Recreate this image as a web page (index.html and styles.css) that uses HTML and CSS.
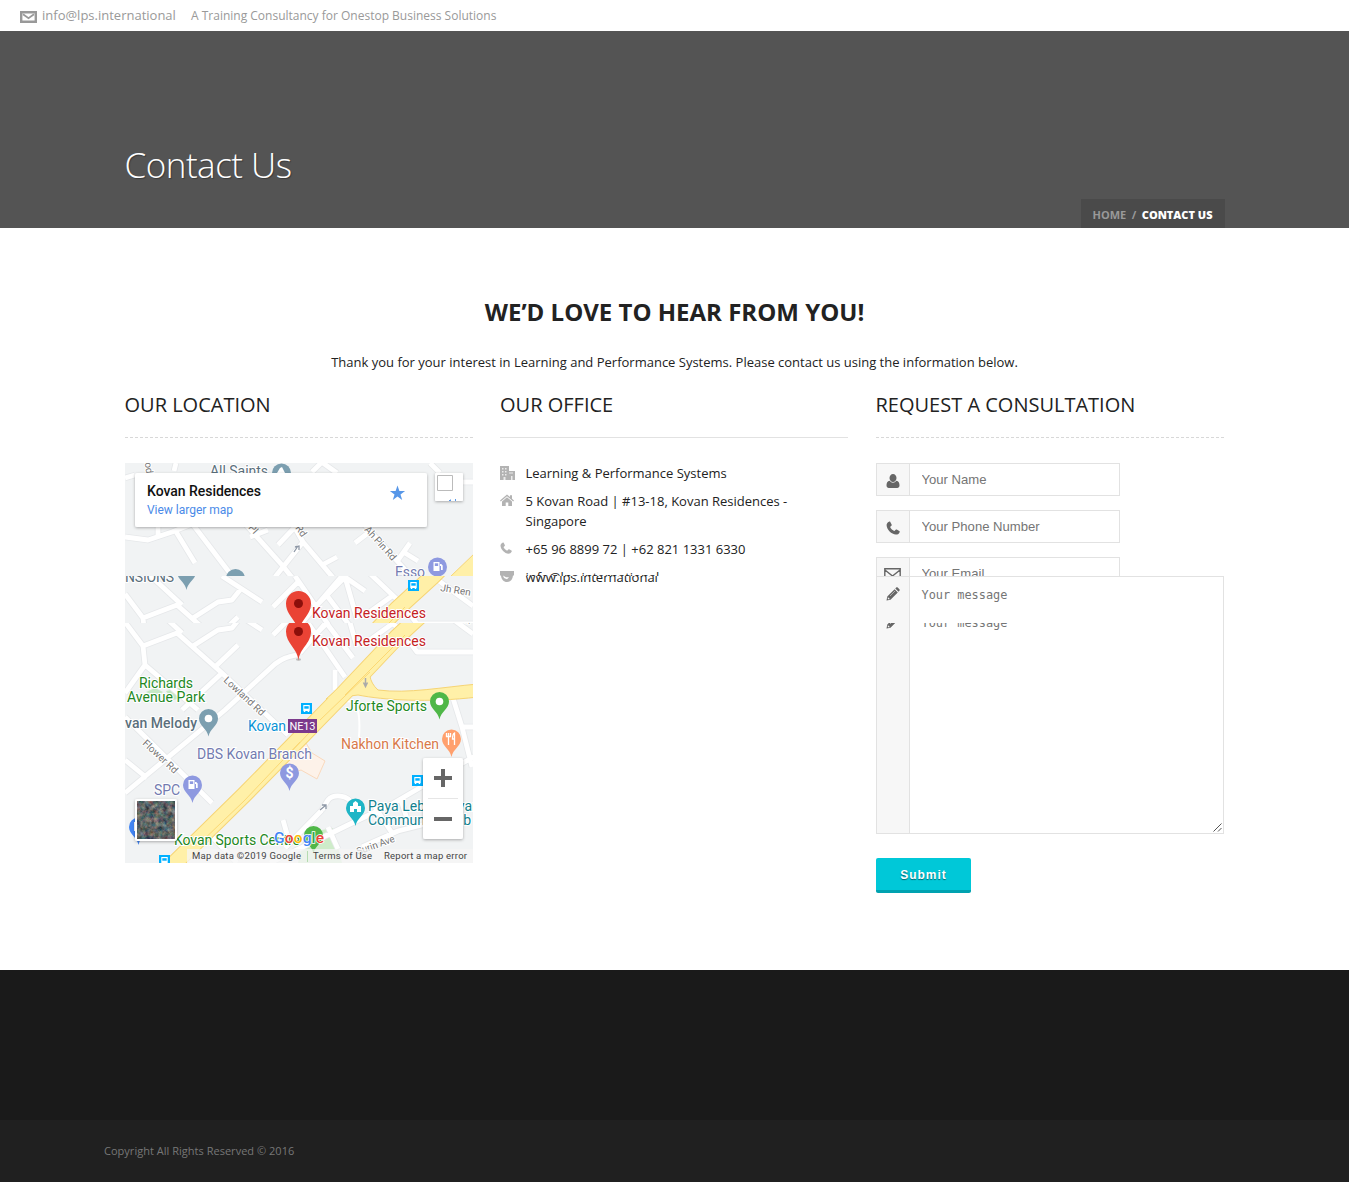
FILE: index.html
```html
<!DOCTYPE html>
<html lang="en">
<head>
<meta charset="utf-8">
<title>Contact Us</title>
<link rel="stylesheet" href="styles.css">
</head>
<body>
<svg class="defs" width="0" height="0" aria-hidden="true">
  <symbol id="i-user" viewBox="0 0 14 14"><path d="M7 0c2 0 3.500 1.700 3.500 4S9 8 7 8 3.500 6.300 3.500 4 5 0 7 0zM3.700 6.700C4.600 8 5.700 8.700 7 8.700s2.400-.7 3.300-2C12.700 6.900 13.500 8.700 13.500 11.500c0 1.600-1 2.500-2.300 2.500H2.800C1.500 14 .5 13.100.5 11.500c0-2.800.8-4.600 3.200-4.800z"/></symbol>
  <symbol id="i-phone" viewBox="0 0 14 14"><path d="M3 .8C3.600.4 4 .5 4.300 1l1.300 2.500c.3.600.1 1-.5 1.500-1 .7-1 1-.5 1.900A11 11 0 0 0 7.400 9.600c.8.500 1.100.5 1.800-.4.500-.7.900-.9 1.500-.6l2.600 1.400c.5.300.6.700.2 1.400-.7 1.500-2 2.200-3.600 2.200C5.500 13.400.7 8.500.6 4.300.5 2.700 1.500 1.500 3 .8z"/></symbol>
  <symbol id="i-pencil" viewBox="0 0 14 14"><path d="M.5 13.500l.8-4L8.600 2.200l3.200 3.200-7.300 7.300zM9.300 1.500l.9-.9c.5-.5 1-.5 1.500 0l1.700 1.700c.5.500.5 1 0 1.500l-.9.900z"/><path d="M2 10.200l1.800 1.800-1.100.4-1-.9z" fill="#f7f7f7"/><path d="M4 9l5-5" stroke="#f7f7f7" stroke-width=".5"/></symbol>
</svg>

<header class="topbar">
  <svg class="topbar-icon" width="17" height="12" viewBox="0 0 17 12"><path d="M1.200 1.200h14.600v9.600H1.200z" fill="none" stroke="#999" stroke-width="2.400"/><path d="M3 3.200l5.500 4L14 3.200" fill="none" stroke="#999" stroke-width="1.800"/></svg>
  <span class="topbar-mail">info@lps.international</span>
  <span class="topbar-tag">A Training Consultancy for Onestop Business Solutions</span>
</header>

<section class="banner">
  <div class="container banner-inner">
    <h1>Contact Us</h1>
    <nav class="crumbs"><a>HOME</a><span>/</span><b>CONTACT US</b></nav>
  </div>
</section>

<main class="container content">
  <h2>WE’D LOVE TO HEAR FROM YOU!</h2>
  <p class="intro">Thank you for your interest in Learning and Performance Systems. Please contact us using the information below.</p>
  <div class="columns">
    <section>
      <h3>OUR LOCATION</h3>
      <svg class="map" viewBox="125 463 348 400" width="348" height="400">
        <defs>
          <clipPath id="top"><path d="M125 463h348v113H125z"/></clipPath>
          <clipPath id="mid"><path d="M125 604h348v47H125z"/></clipPath>
          <clipPath id="low"><path d="M125 623h348v240H125z"/></clipPath>
          <filter id="shadow" x="-20%" y="-20%" width="140%" height="150%"><feDropShadow dx="0" dy="1" stdDeviation="1.500" flood-opacity=".3"/></filter>
          <filter id="grain" x="0" y="0" width="100%" height="100%" color-interpolation-filters="sRGB"><feTurbulence type="fractalNoise" baseFrequency=".22" numOctaves="4" seed="8"/><feColorMatrix values=".7 0 0 0 .02 .35 .4 0 0 .02 .2 .3 .25 0 .02 0 0 0 0 1"/></filter>
          <path id="pin" d="M0 18C-1.500 10-9.500 7-9.500 0a9.500 9.500 0 0 1 19 0C9.500 7 1.500 10 0 18z"/>
          <path id="marker" d="M0 29C-1 17-12.500 12-12.500 0a12.500 12.500 0 0 1 25 0C12.500 12 1 17 0 29z"/>
          <g id="bus"><path d="M-5.500-5.500h11v11h-11z" fill="#00b0ff"/><path d="M-3.200-3.500h6.400v6h-6.400zM-2.700 2h1.500v1.600h-1.500zM1.200 2h1.500v1.600H1.200z" fill="#fff"/><path d="M-2.200-2.300h4.400V.2h-4.400z" fill="#00b0ff"/></g>
          <g id="pump" fill="#fff"><path d="M-4.500-5h6v9h-6zM2-3h1.200l1.500 1.500V3H3V-1H2z"/><path d="M-3.200-3.700h3.400v2.700h-3.400z" fill="#8e99e0"/></g>
          <path id="roads-top" d="M125 478l10-3M158 525v12M125 537l23 3 24-8 30-12M175 530l20 33M188 518l44 58M240 518l42 47 12 15M275 577l28-35-18-32M303 542l32 38M322 565l15-8M250 537l18-7M278 545l17-18M355 543l13-10M362 522l46 51M398 560l12-17M405 553l13 8M312 472l12-12M323 463l14 10M430 463l10 10M462 482h12M176 463l-2 8"/>
          <path id="roads-low" d="M125 622l18 24 34-13 45 40 66 62M143 646l2 19 53 45M125 693l20-28M297 655c-10 2-14 3-22 9l-50 46-100 83M222 673l-40 37M182 633l-57-53M193 646l25-16 14-2 8-10M215 667l23-22M222 604l40 26M273 635l25-25M300 653l17-20 25-29M295 604l50 73M328 625l25 33M315 635l30-30 20 14M345 605l12 42M363 595l40 38 14 19h56M367 642l25-18M435 606l38 28M335 690v-20M452 695l10 32h12M462 727l10 40M125 717l87 86M202 826l35 37M125 760l22 18M322 810l6-10c5-6 20-6 25 5M285 848l37-38M270 863l78-38 44-21 48-28 35-20M283 820l4 14M328 827l10 22M362 847l36-16 40-10M375 807l17 26M400 797l8 25"/>
          <g id="ground">
            <path d="M125 570h348v300H125z" fill="#f1f3f4"/>
            <path d="M146 692l9-4 8 4-6 5zM166 691l14-3 3 10-10 2z" fill="#c5e8c5"/>
            <path d="M305 833l28-5 9 35h-44z" fill="#ceecc9"/>
            <path d="M283 760l23-17 6 10 13 8-8 18-16-9-12 4z" fill="#fdf2e9" stroke="#fad9bd"/>
            <path d="M330 706c10-5 20-6 25-3 5 8 5 20 4 34" fill="none" stroke="#fff" stroke-width="2"/>
            <use href="#roads-low" class="casing"/><use href="#roads-low" class="road"/>
            <path d="M492 545L433 604 397 637 344 693 302 736 244 795 142 895" class="hwy-edge"/>
            <path d="M370 661c-1 10-2 20 8 29 30 4 65-3 100-6v13c-50 6-95 3-120-2l-32 4z" fill="#fff0a8" stroke="#f6d474"/>
            <path d="M492 545L433 604 397 637 344 693 302 736 244 795 142 895" class="hwy"/>
            <path d="M405 635l-60 60M370 672l-50 48M300 742l-56 59-45 43M310 732l-20 21" fill="none" stroke="#fbd874"/>
            <path d="M365.500 678v7m-2-2.500l2 4 2-4" fill="none" stroke="#aaa" stroke-width="1.500"/>
            <path d="M320 810l6-5m-4 0h4v4" fill="none" stroke="#8e98a6" stroke-width="1.300"/>
            <use href="#bus" x="413.500" y="613.500"/>
            <text x="440" y="619" class="street" transform="rotate(9 440 619)">Jh Ren</text>
            <ellipse cx="298.500" cy="659.500" rx="2.500" ry="1.300" fill="#bbb"/>
            <use href="#marker" x="298.500" y="631.500" fill="#ea4335"/><circle cx="298.500" cy="631.500" r="4.500" fill="#8c0f0b"/>
            <text x="312" y="646" textLength="114" class="label red">Kovan Residences</text>
          </g>
        </defs>
        <g clip-path="url(#top)">
          <path d="M125 463h348v113H125z" fill="#f1f3f4"/>
          <use href="#roads-top" class="casing"/><use href="#roads-top" class="road"/>
          <path d="M450 577l25-24v24z" fill="#fff0a8" stroke="#f6d474"/>
          <circle cx="281.500" cy="473" r="9.500" fill="#7c9fb0"/><path d="M277 473l3-5 2-1 3 6z" fill="#fff"/>
          <text x="210" y="476" textLength="58" class="label slate">All Saints</text>
          <text x="144" y="457" class="street" transform="rotate(82 144 457)">ood</text>
          <circle cx="235.500" cy="578.500" r="9.500" fill="#7c9fb0"/>
          <text x="248" y="528" class="street" transform="rotate(48 248 528)">Pl</text>
          <text x="295" y="528" class="street" transform="rotate(55 295 528)">Rd</text>
          <text x="364" y="530" class="street" textLength="42" transform="rotate(48 364 530)">Ah Pin Rd</text>
          <path d="M294 552l4-6m-3 1l4-1v4" fill="none" stroke="#8e98a6" stroke-width="1.300"/>
          <text x="395" y="577" textLength="30" class="label violet">Esso</text>
          <circle cx="437.500" cy="567" r="9.500" fill="#8e99e0"/><use href="#pump" x="438" y="567"/>
        </g>
        <g transform="translate(0 -28)"><g clip-path="url(#mid)">
          <use href="#ground"/>
          <text x="125" y="610" textLength="49" class="label slate">NSIONS</text>
          <use href="#pin" x="186.500" y="600" fill="#7c9fb0"/>
        </g></g>
        <g clip-path="url(#low)">
          <use href="#ground"/>
          <text x="139" y="688" textLength="54" class="label green">Richards</text>
          <text x="127" y="702" textLength="78" class="label green">Avenue Park</text>
          <text x="223" y="681" textLength="52" class="street" transform="rotate(43 223 681)">Lowland Rd</text>
          <text x="142" y="744" textLength="44" class="street" transform="rotate(43 142 744)">Flower Rd</text>
          <text x="125" y="728" textLength="72" class="label slate strong">van Melody</text>
          <use href="#pin" x="208.500" y="718.500" fill="#7c9fb0"/><circle cx="208.500" cy="718.500" r="3.800" fill="#fff"/>
          <use href="#bus" x="306.500" y="708.500"/>
          <text x="248" y="731" textLength="38" class="label blue">Kovan</text>
          <path d="M288 719h29v14h-29z" fill="#7c3a8c"/><text x="289.500" y="730" textLength="26" class="badge">NE13</text>
          <text x="346" y="711" textLength="81" class="label green">Jforte Sports</text>
          <use href="#pin" x="439.500" y="701.500" fill="#4fb748"/><circle cx="439.500" cy="701.500" r="3.800" fill="#fff"/>
          <text x="341" y="749" textLength="98" class="label orange">Nakhon Kitchen</text>
          <use href="#pin" x="451.500" y="739" fill="#ffa06d"/><path d="M448.500 733v12M446.500 733v3.500h4V733M454.500 745v-12q-2 1-2 6h2" fill="none" stroke="#fff" stroke-width="1.300"/>
          <text x="197" y="759" textLength="115" class="label violet">DBS Kovan Branch</text>
          <use href="#pin" x="289.500" y="773" fill="#8e99e0"/><text x="285.500" y="778" class="dollar">$</text>
          <text x="154" y="795" textLength="26" class="label violet">SPC</text>
          <use href="#pin" x="192.500" y="785" fill="#8e99e0"/><use href="#pump" x="193" y="785"/>
          <use href="#bus" x="417.500" y="780.500"/>
          <use href="#pin" x="355.500" y="808" fill="#1fb5c6"/><path d="M350 812v-6h3v-3l2.500-2 2.500 2v3h3v6h-4v-3h-3v3z" fill="#fff"/>
          <text x="368" y="811" textLength="112" class="label teal">Paya Lebar Kovan</text>
          <text x="368" y="825" textLength="103" class="label teal">Community Club</text>
          <use href="#pin" x="138.500" y="827" fill="#4285f4"/><path d="M134 822h6v9h-6z" fill="#fff"/>
          <use href="#bus" x="164.500" y="860.500"/>
          <use href="#pin" x="313.500" y="835.500" fill="#4fb748"/>
          <text x="174" y="845" textLength="126" class="label green">Kovan Sports Centre</text>
          <text x="358" y="855" textLength="40" class="street" transform="rotate(-20 358 855)">Surin Ave</text>
          <path d="M187 849h286v14H187z" fill="#f5f5f5" opacity=".75"/>
          <text x="274" y="842.500" textLength="50" class="logo"><tspan fill="#4285f4">G</tspan><tspan fill="#ea4335">o</tspan><tspan fill="#fbbc05">o</tspan><tspan fill="#4285f4">g</tspan><tspan fill="#34a853">l</tspan><tspan fill="#ea4335">e</tspan></text>
          <g class="legal"><text x="192" y="859" textLength="109">Map data ©2019 Google</text><text x="313" y="859" textLength="59">Terms of Use</text><text x="384" y="859" textLength="83">Report a map error</text></g>
          <path d="M307.500 851v11" stroke="#b5dcb0"/>
          <g filter="url(#shadow)"><rect x="135" y="799" width="42" height="42" rx="2" fill="#fff"/></g>
          <rect x="137" y="801" width="38" height="38" filter="url(#grain)"/>
          <rect x="423" y="758" width="40" height="81" rx="2" fill="#fff" filter="url(#shadow)"/>
          <path d="M428 798.500h30" stroke="#e6e6e6"/>
          <path d="M434 778h18M443 769v18M434 819h18" stroke="#666" stroke-width="4"/>
        </g>
        <rect x="135" y="473" width="292" height="54" rx="2" fill="#fff" filter="url(#shadow)"/>
        <text x="147" y="496" textLength="114" class="place">Kovan Residences</text>
        <text x="147" y="514" textLength="86" class="larger">View larger map</text>
        <path d="M397.500 485.500l1.900 5.400h5.700l-4.600 3.500 1.700 5.600-4.700-3.400-4.700 3.400 1.700-5.600-4.600-3.500h5.700z" fill="#5797e8"/>
        <rect x="435" y="473" width="28" height="28" rx="1" fill="#fff" filter="url(#shadow)"/>
        <path d="M437.500 475.500h15v15h-15z" fill="#fff" stroke="#bbb"/>
        <path d="M449 500.500h1.500M450.500 499.500v1.500M455.500 499v2" stroke="#5797e8"/>
      </svg>
    </section>

    <section class="office">
      <h3 class="solid">OUR OFFICE</h3>
      <ul>
        <li><svg width="15" height="14" viewBox="0 0 15 14"><path d="M0 0h9v14H0zM9 5h6v9H9z"/><path d="M2 2h1.500v1.500H2zM5 2h1.500v1.500H5zM2 5h1.500v1.500H2zM5 5h1.500v1.500H5zM2 8h1.500v1.500H2zM5 8h1.500v1.500H5zM3.500 11h2v3h-2zM9 6.500h4v1H9zM11 10h1.500v4H11z" fill="#fff" opacity=".75"/></svg><span>Learning &amp; Performance Systems</span></li>
        <li><svg width="14" height="14" viewBox="0 0 14 14"><path d="M7 .5L10 3V1.300h2v3.500l2 1.700-.8.900L7 2.300.800 7.400 0 6.500zM7 3.300l5 4.100V12H8.300V8.500H5.700V12H2V7.400z"/></svg><span>5 Kovan Road | #13-18, Kovan Residences -<br>Singapore</span></li>
        <li><svg width="12" height="12" viewBox="0 0 14 14"><use href="#i-phone"/></svg><span>+65 96 8899 72 | +62 821 1331 6330</span></li>
        <li><svg width="14" height="14" viewBox="0 0 14 14"><path d="M0 1h14v4.500H0zM1 5.500h12c-.3 4-2.700 6.500-6 6.500S1.300 9.500 1 5.500z"/><path d="M3 5.500l3 1.700h3l-2 2-3-1.200z" fill="#fff"/></svg><span class="split"><span class="upper">info@lps.international</span><span class="lower">www.lps.international</span></span></li>
      </ul>
    </section>

    <section>
      <h3>REQUEST A CONSULTATION</h3>
      <form>
        <div class="field"><span class="addon"><svg width="14" height="14"><use href="#i-user"/></svg></span><input placeholder="Your Name"></div>
        <div class="field"><span class="addon"><svg width="14" height="14"><use href="#i-phone"/></svg></span><input placeholder="Your Phone Number"></div>
        <div class="field cut"><span class="addon"><svg width="17" height="13" viewBox="0 0 17 13"><path d="M.800.8h15.400v11.400H.8zM1 2l7.500 6L16 2" fill="none" stroke="#666" stroke-width="1.400"/></svg></span><input placeholder="Your Email"></div>
        <div class="message">
          <span class="addon"><svg width="14" height="14"><use href="#i-pencil"/></svg><svg class="half-icon" width="14" height="14"><use href="#i-pencil"/></svg></span>
          <div class="area"><span>Your message</span><span class="half">Your message</span>
            <svg class="grip" width="9" height="9"><path d="M.5 8.500l8-8M5 8.500L8.500 5" stroke="#555" fill="none"/></svg></div>
        </div>
        <button type="button">Submit</button>
      </form>
    </section>
  </div>
</main>

<footer><div class="copyright">Copyright All Rights Reserved © 2016</div></footer>
</body>
</html>
```
FILE: styles.css
```css
* { box-sizing: border-box; }
body { margin: 0; background: #fff; color: #222; font: 13px/20px "Open Sans", sans-serif; }
.defs { position: absolute; }
.container { width: 1100px; margin: 0 auto; }

.topbar { height: 31px; padding-left: 20px; display: flex; align-items: center; color: #999; }
.topbar-icon { margin: 3px 5px 0 0; }
.topbar-mail { font-size: 13px; width: 149px; padding-bottom: 1px; white-space: nowrap; }
.topbar-tag { font-size: 12px; white-space: nowrap; }

.banner { height: 197px; background: #545454; }
.banner-inner { height: 100%; display: flex; justify-content: space-between; }
h1 { margin: 109px 0 0; font-size: 35px; line-height: 50px; font-weight: 300; letter-spacing: -.5px; color: #fff; text-shadow: 1px 1px 1px rgba(0,0,0,.3); }
.crumbs { align-self: flex-end; width: 144px; height: 29px; padding: 0 12px; display: flex; justify-content: space-between; background: #4a4a4a; color: #999; font-size: 11px; line-height: 32px; font-weight: 700; white-space: nowrap; }
.crumbs b { color: #fff; }

.content { height: 742px; padding-top: 68px; }
h2 { margin: 0; font-size: 24px; line-height: 32px; text-align: center; font-weight: 700; }
.intro { margin: 24px 0 0; text-align: center; line-height: 20px; }
.columns { margin-top: 19px; display: grid; grid-template-columns: repeat(3, 348px); column-gap: 27.5px; }
h3 { margin: 0 0 25px; height: 47px; font-size: 20px; line-height: 28px; font-weight: 400; border-bottom: 1px dashed #d8d8d8; white-space: nowrap; }
h3.solid { border-bottom: 1px solid #e2e2e2; }

.map { display: block; font-family: Roboto, sans-serif; }
.casing { fill: none; stroke: #e6e8ea; stroke-width: 6.5; stroke-linejoin: round; }
.road { fill: none; stroke: #fff; stroke-width: 4.8; stroke-linejoin: round; }
.hwy-edge { fill: none; stroke: #f6d474; stroke-width: 17; }
.hwy { fill: none; stroke: #fff0a8; stroke-width: 15; }
.label { font-size: 14px; paint-order: stroke; stroke: #fff; stroke-width: 2px; }
.strong { font-weight: 500; }
.red { fill: #c5221f; }
.green { fill: #238823; }
.slate { fill: #5b6f7c; }
.violet { fill: #737bb0; }
.orange { fill: #d8794a; }
.blue { fill: #0a93d6; }
.teal { fill: #12818e; }
.street { font-size: 10px; fill: #777; paint-order: stroke; stroke: #fff; stroke-width: 2px; }
.badge { font-size: 11px; fill: #fff; }
.dollar { font-size: 14px; font-weight: 700; fill: #fff; }
.logo { font: 500 15.5px Roboto, sans-serif; paint-order: stroke; stroke: #fff; stroke-width: 1.5px; }
.legal { font-size: 9.5px; fill: #444; }
.place { font-size: 14px; font-weight: 500; fill: #111; }
.larger { font-size: 12px; fill: #4a8ae8; }

.office ul { list-style: none; margin: 0; padding: 0; display: flex; flex-direction: column; gap: 8px; }
.office li { display: flex; }
.office li > svg { margin-top: 3px; fill: #b3b3b3; }
.office li > span { margin-left: auto; width: 322.5px; }
.split { display: grid; }
.split > span { grid-area: 1 / 1; }
.upper { clip-path: inset(0 0 11px 0); }
.lower { clip-path: inset(9px 0 0 0); }

.field { width: 244px; height: 33px; margin-bottom: 14px; display: flex; border: 1px solid #e2e2e2; }
.cut { height: 19px; margin: 0; overflow: hidden; border-bottom: 0; }
.addon { flex: 0 0 33px; background: #f7f7f7; border-right: 1px solid #e2e2e2; fill: #666; display: flex; flex-direction: column; align-items: center; padding-top: 10px; }
.addon svg { flex: none; }
input { border: 0; padding: 0 12px; width: 209px; height: 31px; font: 13.1px "Liberation Sans", sans-serif; background: none; }
input::placeholder { color: #757575; }
.message { height: 258px; display: flex; border: 1px solid #e2e2e2; }
.half-icon { margin-top: 14px; clip-path: inset(8px 0 0 0); }
.area { flex: 1; position: relative; padding: 8px 12px; display: flex; flex-direction: column; gap: 8px; font: 11.9px/20px "DejaVu Sans Mono", monospace; color: #757575; }
.half { clip-path: inset(10px 0 0 0); }
.grip { position: absolute; right: 1px; bottom: 1px; }
button { display: block; margin-top: 24px; width: 95px; height: 35px; padding: 1px 0 0 1px; border: 0; border-bottom: 3px solid #00a2b0; border-radius: 2px; background: #00c8d8; color: #fff; font: 700 12px "Liberation Sans", sans-serif; letter-spacing: 1px; text-shadow: 0 1px 1px rgba(0,0,0,.5); }

footer { height: 212px; padding-top: 150px; background: #1a1a1a; }
.copyright { height: 62px; padding-left: 104px; background: #202020; color: #777; font-size: 11px; line-height: 62px; letter-spacing: .02px; }
```
